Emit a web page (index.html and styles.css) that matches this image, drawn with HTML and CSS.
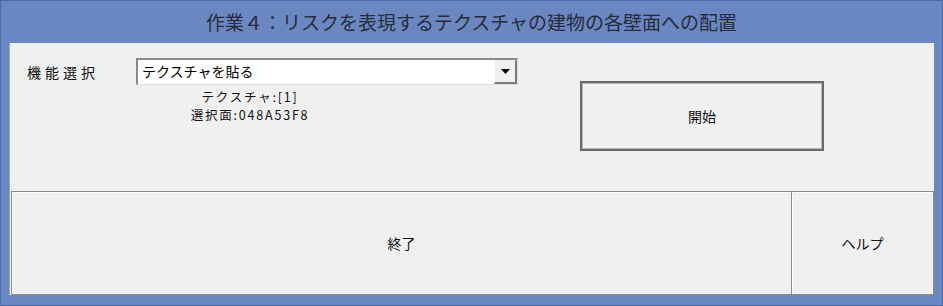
FILE: index.html
```html
<!DOCTYPE html>
<html lang="ja">
<head>
<meta charset="utf-8">
<link rel="stylesheet" href="styles.css">
</head>
<body>
<div class="window">
  <div class="title">作業４：リスクを表現するテクスチャの建物の各壁面への配置</div>
  <div class="panel">
    <div class="top">
      <div class="left">
        <div class="row">
          <span class="label">機能選択</span>
          <div class="combo">
            <span class="combo-text">テクスチャを貼る</span>
            <span class="combo-btn"><svg width="9" height="5" viewBox="0 0 9 5"><path d="M0 0H9L4.5 5Z" fill="#000"/></svg></span>
          </div>
        </div>
        <div class="info">
          <div>テクスチャ:[1]</div>
          <div>選択面:048A53F8</div>
        </div>
      </div>
      <button class="start">開始</button>
    </div>
    <div class="bottom">
      <button class="btn end">終了</button>
      <button class="btn help">ヘルプ</button>
    </div>
  </div>
</div>
</body>
</html>
```

FILE: styles.css
```css
* { box-sizing: border-box; }
html, body { margin: 0; padding: 0; }
body {
  width: 943px;
  height: 306px;
  background: #6b87c1;
  font-family: "Noto Sans CJK JP", "Noto Sans", sans-serif;
  color: #000;
}
.window {
  width: 943px;
  height: 306px;
  border: 1px solid #4d68a7;
  display: flex;
  flex-direction: column;
}
.title {
  height: 42px;
  display: flex;
  align-items: center;
  justify-content: center;
  font-size: 19px;
  color: #262c38;
  padding-bottom: 2px;
}
.panel {
  margin: 0 8px;
  height: 252px;
  background: #f0f0f0;
  border-left: 1px solid #9aa6c4;
  display: flex;
  flex-direction: column;
}
.top {
  height: 148px;
  display: flex;
  padding-left: 17px;
  padding-top: 15px;
}
.left {
  width: 545px;
  display: flex;
  flex-direction: column;
}
.row {
  display: flex;
  align-items: center;
  height: 27px;
}
.label {
  width: 109px;
  font-size: 14px;
  letter-spacing: 4px;
  color: #111;
}
.combo {
  width: 382px;
  height: 27px;
  background: #fff;
  border-top: 2px solid #8a8a8a;
  border-left: 2px solid #8a8a8a;
  border-right: 1px solid #dcdcdc;
  border-bottom: 1px solid #dcdcdc;
  display: flex;
  align-items: stretch;
}
.combo-text {
  flex: 1;
  font-size: 14px;
  line-height: 22px;
  padding-left: 4px;
  color: #000;
}
.combo-btn {
  width: 23px;
  background: #f0f0f0;
  border-right: 2px solid #7a7a7a;
  border-bottom: 2px solid #7a7a7a;
  border-top: 1px solid #e8e8e8;
  border-left: 1px solid #fff;
  display: flex;
  align-items: center;
  justify-content: center;
}
.info {
  width: 446px;
  text-align: center;
  font-size: 12.5px;
  line-height: 18px;
  margin-top: 3px;
  color: #111;
  letter-spacing: 1.8px;
}
.start {
  margin-left: 8px;
  margin-top: 23px;
  width: 244px;
  height: 70px;
  background: #f0f0f0;
  border: 2px solid #6a6a6a;
  box-shadow: inset 0 0 0 1px #b9b9b9;
  font-family: inherit;
  font-size: 14px;
  color: #111;
  padding: 0;
}
.bottom {
  flex: 1;
  display: flex;
  padding: 0 0 0 1px;
}
.btn {
  height: 104px;
  background: #f0f0f0;
  border: 1px solid #8c8c8c;
  box-shadow: inset 1px 1px 0 #fff;
  font-family: inherit;
  font-size: 14px;
  color: #111;
  padding: 0;
}
.end { width: 781px; }
.help { width: 143px; border-left: 1px solid #8c8c8c; margin-left: -1px; }
```
